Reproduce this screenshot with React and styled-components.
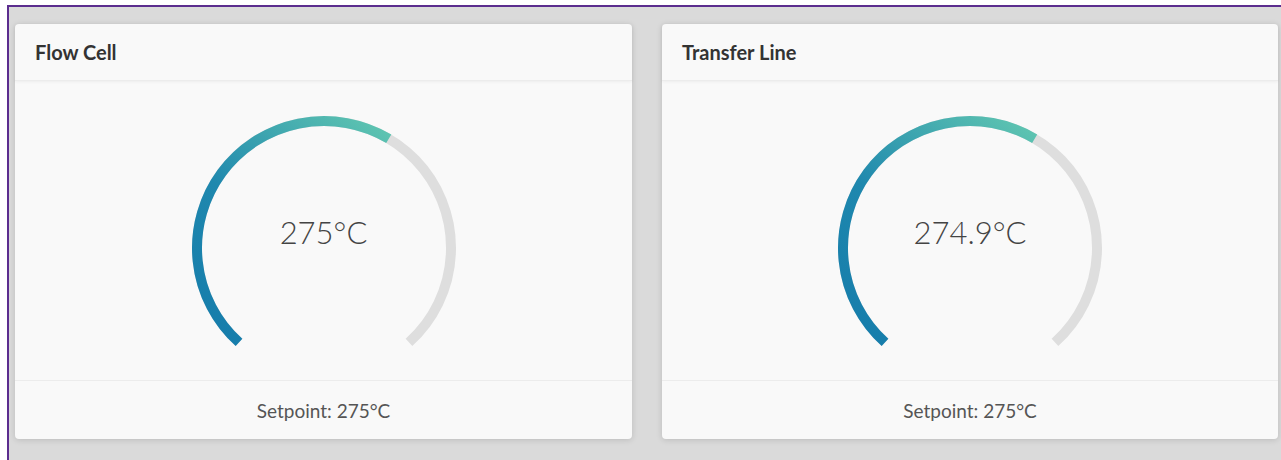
import React from "react";
import styled, { createGlobalStyle } from "styled-components";

const GlobalStyle = createGlobalStyle`
  html, body {
    margin: 0;
    padding: 0;
    background: #ffffff;
    overflow: hidden;
    font-family: "Lato", "Noto Sans", sans-serif;
  }
`;

const Frame = styled.div`
  margin: 5px 0 0 7px;
  height: calc(100vh - 5px);
  border-top: 2px solid #5b2d8e;
  border-left: 2px solid #5b2d8e;
  background: #dadada;
  padding: 17px 0 0 6px;
  box-sizing: border-box;
`;

const CardGrid = styled.div`
  display: grid;
  grid-template-columns: 617px 616px;
  column-gap: 30px;
`;

const Card = styled.section`
  background: #f9f9f9;
  border-radius: 4px;
  box-shadow: 0 1px 6px rgba(0, 0, 0, 0.14);
  display: flex;
  flex-direction: column;
  height: 415px;
`;

const CardHeader = styled.header`
  height: 57px;
  padding: 0 20px;
  display: flex;
  align-items: center;
  border-bottom: 1px solid #ececec;
  box-shadow: 0 1px 3px rgba(0, 0, 0, 0.05);
  box-sizing: border-box;
`;

const Title = styled.h3`
  margin: 0;
  font-size: 20px;
  font-weight: 700;
  color: #333333;
`;

const CardBody = styled.div`
  flex: 1;
  display: flex;
  align-items: center;
  justify-content: center;
  border-bottom: 1px solid #ececec;
`;

const GaugeWrap = styled.div`
  position: relative;
  width: 270px;
  height: 270px;
`;

const GaugeValue = styled.div`
  position: absolute;
  left: 0;
  right: 0;
  top: 117px;
  text-align: center;
  font-size: 31px;
  font-weight: 300;
  color: #444444;
`;

const CardFooter = styled.footer`
  height: 58px;
  display: flex;
  align-items: center;
  justify-content: center;
  font-size: 19px;
  color: #555555;
`;

// gauge geometry: 276° arc open at the bottom
const CX = 135;
const CY = 152;
const R = 127;
const SWEEP = 138;

function polar(deg) {
  const rad = (deg * Math.PI) / 180;
  return [CX + R * Math.sin(rad), CY - R * Math.cos(rad)];
}

function arcPath(from, to) {
  const [x1, y1] = polar(from);
  const [x2, y2] = polar(to);
  const large = to - from > 180 ? 1 : 0;
  return `M ${x1} ${y1} A ${R} ${R} 0 ${large} 1 ${x2} ${y2}`;
}

function Gauge({ id, value, max }) {
  const end = -SWEEP + (value / max) * SWEEP * 2;
  return (
    <GaugeWrap>
      <svg width="270" height="270" viewBox="0 0 270 270">
        <defs>
          <linearGradient
            id={id}
            gradientUnits="userSpaceOnUse"
            x1="20"
            y1="250"
            x2="200"
            y2="20"
          >
            <stop offset="0" stopColor="#157cab" />
            <stop offset="0.45" stopColor="#1f88ae" />
            <stop offset="1" stopColor="#63c9b1" />
          </linearGradient>
        </defs>
        <path d={arcPath(-SWEEP, SWEEP)} fill="none" stroke="#dedede" strokeWidth="10" />
        <path d={arcPath(-SWEEP, end)} fill="none" stroke={`url(#${id})`} strokeWidth="10" />
      </svg>
      <GaugeValue>{value}°C</GaugeValue>
    </GaugeWrap>
  );
}

const sensors = [
  { id: "flow-cell", title: "Flow Cell", value: 275, setpoint: 275 },
  { id: "transfer-line", title: "Transfer Line", value: 274.9, setpoint: 275 },
];

export default function App() {
  return (
    <>
      <GlobalStyle />
      <Frame>
        <CardGrid>
          {sensors.map((s) => (
            <Card key={s.id}>
              <CardHeader>
                <Title>{s.title}</Title>
              </CardHeader>
              <CardBody>
                <Gauge id={`grad-${s.id}`} value={s.value} max={450} />
              </CardBody>
              <CardFooter>Setpoint: {s.setpoint}°C</CardFooter>
            </Card>
          ))}
        </CardGrid>
      </Frame>
    </>
  );
}
